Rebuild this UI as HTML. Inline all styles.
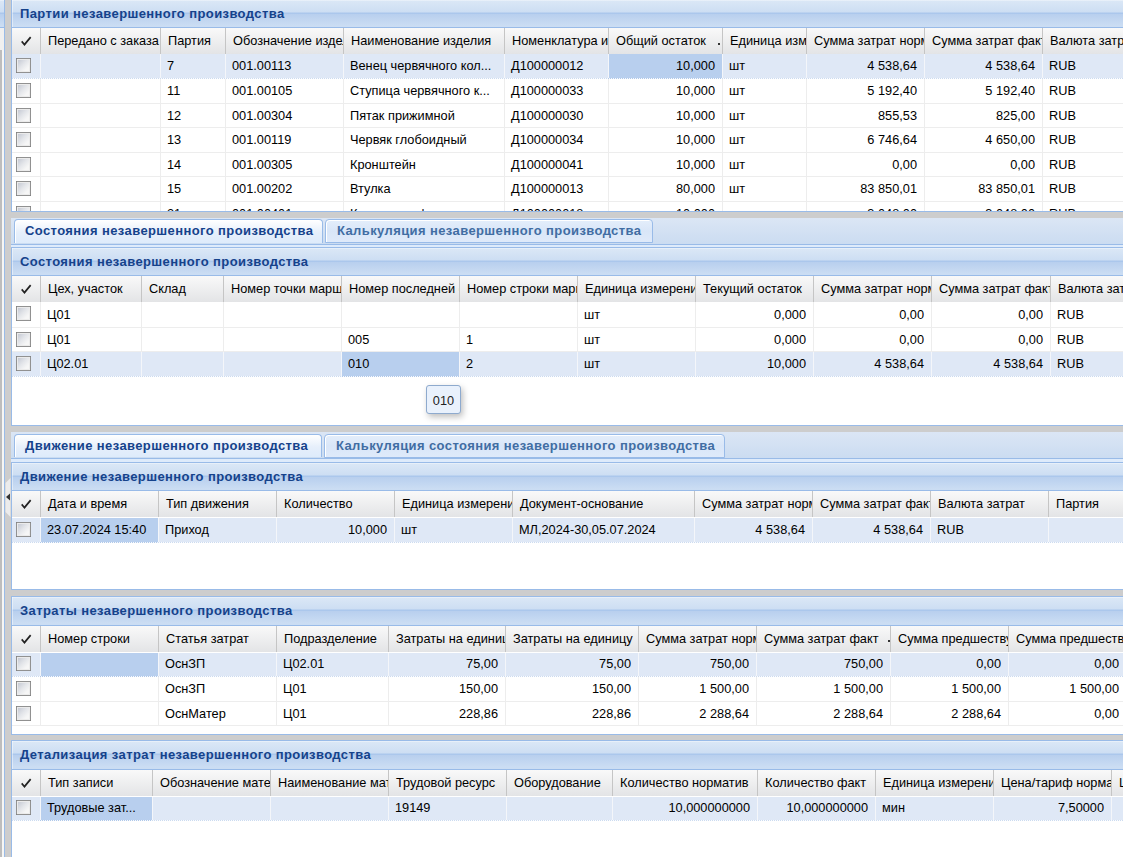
<!DOCTYPE html><html><head><meta charset="utf-8"><style>
*{margin:0;padding:0;box-sizing:border-box}
html,body{width:1123px;height:857px;overflow:hidden;background:#cdcdcd;font-family:'Liberation Sans', sans-serif;font-size:12.75px;color:#000}
div,svg{position:absolute}
.ph{left:12px;width:1111px;background:linear-gradient(to bottom,#f5f8fc 0px,#dae7f6 1px,#cddef3 12px,#abc7ec 13px,#abc7ec 14px,#b8cfee 14px,#cbddf3 26px);border-bottom:1px solid #99bbe8;box-shadow:inset 1px 0 0 rgba(255,255,255,0.45)}
.pt{position:absolute;left:8px;top:6px;font-weight:bold;color:#15428b;font-size:13px;letter-spacing:0.4px;white-space:nowrap}
.gh{left:12px;width:1111px;height:26px;background:linear-gradient(to bottom,#f9f9f9,#e3e4e6)}
.ck{left:12px}
.hs{width:1px;height:26px;background:#c5c5c5}
.hc{height:26px;line-height:26px;padding-left:7px;white-space:nowrap;overflow:hidden;color:#000}
.row{left:12px;width:1111px;background:#fff}
.row.sel{background:#dfe8f6}
.selc{background:#b8cfee}
.cl{width:1px;background:#ededed}
.cl.s{background:#f4f6fa}
.rb{left:12px;width:1111px;height:1px;background:#ededed}
.rb.f{background:repeating-linear-gradient(to right,rgba(150,180,225,0.25) 0 1px,rgba(255,255,255,0.9) 1px 2px)}
.cb{width:15px;height:15px;border:1px solid #7f7f7f;background:#ebebeb}
.cb::after{content:'';position:absolute;left:1px;top:1px;width:11px;height:11px;background:linear-gradient(135deg,#c6cad4 0%,#e4e6ea 45%,#f6f6f6 80%);box-shadow:0 0 1px 1px #ebebeb}
.c{padding-left:7px;white-space:nowrap;overflow:hidden}
.c.r{padding-left:0;padding-right:7px;text-align:right}
.body{left:12px;width:1111px;background:#fff}
.vb{width:1px;background:#99bbe8}
.hb{left:12px;width:1111px;height:1px;background:#99bbe8}
.tb{left:11px;width:1112px;height:30px;background:linear-gradient(to bottom,#dbe6f5,#cbdcf1)}
.tab{border:1px solid #99bbe8;border-radius:4px 4px 0 0;background:linear-gradient(to bottom,#e4eefb,#d9e6f8 50%,#dfeafa);box-shadow:inset 1px 1px 0 #fff}
.tab span{position:absolute;left:11px;top:3px;font-weight:bold;color:#416da3;font-size:13px;letter-spacing:0.4px;white-space:nowrap}
.tab.act{border-bottom:0;background:linear-gradient(to bottom,#ffffff,#e6effb 55%,#deebfb)}
.tab.act span{color:#15428b;left:10px}
.tbs{left:11px;width:1112px;height:4px;border-top:1px solid #99bbe8;border-bottom:1px solid #99bbe8;background:#deebfb}
.tip{left:426px;top:385px;width:35px;height:29px;border:1px solid #8eaace;border-radius:3px;background:#e9f1fc;box-shadow:2px 3px 6px rgba(0,0,0,0.25);text-align:center;line-height:29px;color:#222}
</style></head><body>
<div style="left:0;top:0;width:2px;height:857px;background:#bdbdbd"></div>
<div style="left:2px;top:0;width:2px;height:857px;background:#f6f6f4"></div>
<div style="left:0;top:0;width:4px;height:27px;background:linear-gradient(to bottom,#f5f8fc 0px,#dae7f6 1px,#cddef3 12px,#abc7ec 13px,#abc7ec 14px,#b8cfee 14px,#cbddf3 26px)"></div>
<div style="left:0;top:27px;width:4px;height:1px;background:#99bbe8"></div>
<div style="left:0;top:28px;width:4px;height:22px;background:#f0f0f0"></div>
<div class="vb" style="left:4px;top:0;height:857px"></div>
<svg style="left:5px;top:477px" width="6" height="41" viewBox="0 0 6 41"><path d="M0.5 6 L5.5 1 L5.5 40 L0.5 35 Z" fill="#ececec"/><path d="M1 20 L5 16.5 L5 23.5 Z" fill="#333"/></svg>
<div class="body" style="top:28px;height:183px"></div>
<div class="ph" style="top:0px;height:28px"><span class="pt" style="top:6px">Партии незавершенного производства</span></div>
<div class="gh" style="top:28px;height:26px"></div>
<svg class="ck" style="top:28px" width="28" height="26" viewBox="0 0 28 26"><path d="M9.1 13.9 L10.3 12.8 L12.4 15.3 L18.0 8.6 L19.3 9.7 L12.5 18.0 Z" fill="#222"/></svg>
<div class="hs" style="left:40px;top:28px;height:26px"></div>
<div class="hc" style="left:41px;top:28px;width:119px;height:26px;line-height:26px">Передано с заказа</div>
<div class="hs" style="left:160px;top:28px;height:26px"></div>
<div class="hc" style="left:161px;top:28px;width:64px;height:26px;line-height:26px">Партия</div>
<div class="hs" style="left:225px;top:28px;height:26px"></div>
<div class="hc" style="left:226px;top:28px;width:117px;height:26px;line-height:26px">Обозначение изделия</div>
<div class="hs" style="left:343px;top:28px;height:26px"></div>
<div class="hc" style="left:344px;top:28px;width:160px;height:26px;line-height:26px">Наименование изделия</div>
<div class="hs" style="left:504px;top:28px;height:26px"></div>
<div class="hc" style="left:505px;top:28px;width:103px;height:26px;line-height:26px">Номенклатура изделия</div>
<div class="hs" style="left:608px;top:28px;height:26px"></div>
<div class="hc" style="left:609px;top:28px;width:113px;height:26px;line-height:26px">Общий остаток</div>
<div class="hs" style="left:722px;top:28px;height:26px"></div>
<div class="hc" style="left:723px;top:28px;width:83px;height:26px;line-height:26px">Единица измерения</div>
<div class="hs" style="left:806px;top:28px;height:26px"></div>
<div class="hc" style="left:807px;top:28px;width:117px;height:26px;line-height:26px">Сумма затрат норматив</div>
<div class="hs" style="left:924px;top:28px;height:26px"></div>
<div class="hc" style="left:925px;top:28px;width:117px;height:26px;line-height:26px">Сумма затрат факт</div>
<div class="hs" style="left:1042px;top:28px;height:26px"></div>
<div class="hc" style="left:1043px;top:28px;width:117px;height:26px;line-height:26px">Валюта затрат</div>
<div class="row sel" style="top:54px;height:25px"></div>
<div class="selc" style="left:608px;top:54px;width:114px;height:25px"></div>
<div class="cl s" style="left:40px;top:54px;height:24px"></div>
<div class="cl s" style="left:160px;top:54px;height:24px"></div>
<div class="cl s" style="left:225px;top:54px;height:24px"></div>
<div class="cl s" style="left:343px;top:54px;height:24px"></div>
<div class="cl s" style="left:504px;top:54px;height:24px"></div>
<div class="cl s" style="left:608px;top:54px;height:24px"></div>
<div class="cl s" style="left:722px;top:54px;height:24px"></div>
<div class="cl s" style="left:806px;top:54px;height:24px"></div>
<div class="cl s" style="left:924px;top:54px;height:24px"></div>
<div class="cl s" style="left:1042px;top:54px;height:24px"></div>
<div class="rb f" style="top:78px"></div>
<div class="cb" style="left:16px;top:58px"></div>
<div class="c" style="left:160px;top:54px;width:65px;height:24px;line-height:24px">7</div>
<div class="c" style="left:225px;top:54px;width:118px;height:24px;line-height:24px">001.00113</div>
<div class="c" style="left:343px;top:54px;width:161px;height:24px;line-height:24px">Венец червячного кол...</div>
<div class="c" style="left:504px;top:54px;width:104px;height:24px;line-height:24px">Д100000012</div>
<div class="c r" style="left:608px;top:54px;width:114px;height:24px;line-height:24px">10,000</div>
<div class="c" style="left:722px;top:54px;width:84px;height:24px;line-height:24px">шт</div>
<div class="c r" style="left:806px;top:54px;width:118px;height:24px;line-height:24px">4 538,64</div>
<div class="c r" style="left:924px;top:54px;width:118px;height:24px;line-height:24px">4 538,64</div>
<div class="c" style="left:1042px;top:54px;width:118px;height:24px;line-height:24px">RUB</div>
<div class="row" style="top:79px;height:24px"></div>
<div class="cl" style="left:40px;top:79px;height:24px"></div>
<div class="cl" style="left:160px;top:79px;height:24px"></div>
<div class="cl" style="left:225px;top:79px;height:24px"></div>
<div class="cl" style="left:343px;top:79px;height:24px"></div>
<div class="cl" style="left:504px;top:79px;height:24px"></div>
<div class="cl" style="left:608px;top:79px;height:24px"></div>
<div class="cl" style="left:722px;top:79px;height:24px"></div>
<div class="cl" style="left:806px;top:79px;height:24px"></div>
<div class="cl" style="left:924px;top:79px;height:24px"></div>
<div class="cl" style="left:1042px;top:79px;height:24px"></div>
<div class="rb" style="top:103px"></div>
<div class="cb" style="left:16px;top:83px"></div>
<div class="c" style="left:160px;top:79px;width:65px;height:24px;line-height:24px">11</div>
<div class="c" style="left:225px;top:79px;width:118px;height:24px;line-height:24px">001.00105</div>
<div class="c" style="left:343px;top:79px;width:161px;height:24px;line-height:24px">Ступица червячного к...</div>
<div class="c" style="left:504px;top:79px;width:104px;height:24px;line-height:24px">Д100000033</div>
<div class="c r" style="left:608px;top:79px;width:114px;height:24px;line-height:24px">10,000</div>
<div class="c" style="left:722px;top:79px;width:84px;height:24px;line-height:24px">шт</div>
<div class="c r" style="left:806px;top:79px;width:118px;height:24px;line-height:24px">5 192,40</div>
<div class="c r" style="left:924px;top:79px;width:118px;height:24px;line-height:24px">5 192,40</div>
<div class="c" style="left:1042px;top:79px;width:118px;height:24px;line-height:24px">RUB</div>
<div class="row" style="top:104px;height:23px"></div>
<div class="cl" style="left:40px;top:104px;height:23px"></div>
<div class="cl" style="left:160px;top:104px;height:23px"></div>
<div class="cl" style="left:225px;top:104px;height:23px"></div>
<div class="cl" style="left:343px;top:104px;height:23px"></div>
<div class="cl" style="left:504px;top:104px;height:23px"></div>
<div class="cl" style="left:608px;top:104px;height:23px"></div>
<div class="cl" style="left:722px;top:104px;height:23px"></div>
<div class="cl" style="left:806px;top:104px;height:23px"></div>
<div class="cl" style="left:924px;top:104px;height:23px"></div>
<div class="cl" style="left:1042px;top:104px;height:23px"></div>
<div class="rb" style="top:127px"></div>
<div class="cb" style="left:16px;top:108px"></div>
<div class="c" style="left:160px;top:104px;width:65px;height:23px;line-height:23px">12</div>
<div class="c" style="left:225px;top:104px;width:118px;height:23px;line-height:23px">001.00304</div>
<div class="c" style="left:343px;top:104px;width:161px;height:23px;line-height:23px">Пятак прижимной</div>
<div class="c" style="left:504px;top:104px;width:104px;height:23px;line-height:23px">Д100000030</div>
<div class="c r" style="left:608px;top:104px;width:114px;height:23px;line-height:23px">10,000</div>
<div class="c" style="left:722px;top:104px;width:84px;height:23px;line-height:23px">шт</div>
<div class="c r" style="left:806px;top:104px;width:118px;height:23px;line-height:23px">855,53</div>
<div class="c r" style="left:924px;top:104px;width:118px;height:23px;line-height:23px">825,00</div>
<div class="c" style="left:1042px;top:104px;width:118px;height:23px;line-height:23px">RUB</div>
<div class="row" style="top:128px;height:24px"></div>
<div class="cl" style="left:40px;top:128px;height:24px"></div>
<div class="cl" style="left:160px;top:128px;height:24px"></div>
<div class="cl" style="left:225px;top:128px;height:24px"></div>
<div class="cl" style="left:343px;top:128px;height:24px"></div>
<div class="cl" style="left:504px;top:128px;height:24px"></div>
<div class="cl" style="left:608px;top:128px;height:24px"></div>
<div class="cl" style="left:722px;top:128px;height:24px"></div>
<div class="cl" style="left:806px;top:128px;height:24px"></div>
<div class="cl" style="left:924px;top:128px;height:24px"></div>
<div class="cl" style="left:1042px;top:128px;height:24px"></div>
<div class="rb" style="top:152px"></div>
<div class="cb" style="left:16px;top:132px"></div>
<div class="c" style="left:160px;top:128px;width:65px;height:24px;line-height:24px">13</div>
<div class="c" style="left:225px;top:128px;width:118px;height:24px;line-height:24px">001.00119</div>
<div class="c" style="left:343px;top:128px;width:161px;height:24px;line-height:24px">Червяк глобоидный</div>
<div class="c" style="left:504px;top:128px;width:104px;height:24px;line-height:24px">Д100000034</div>
<div class="c r" style="left:608px;top:128px;width:114px;height:24px;line-height:24px">10,000</div>
<div class="c" style="left:722px;top:128px;width:84px;height:24px;line-height:24px">шт</div>
<div class="c r" style="left:806px;top:128px;width:118px;height:24px;line-height:24px">6 746,64</div>
<div class="c r" style="left:924px;top:128px;width:118px;height:24px;line-height:24px">4 650,00</div>
<div class="c" style="left:1042px;top:128px;width:118px;height:24px;line-height:24px">RUB</div>
<div class="row" style="top:153px;height:23px"></div>
<div class="cl" style="left:40px;top:153px;height:23px"></div>
<div class="cl" style="left:160px;top:153px;height:23px"></div>
<div class="cl" style="left:225px;top:153px;height:23px"></div>
<div class="cl" style="left:343px;top:153px;height:23px"></div>
<div class="cl" style="left:504px;top:153px;height:23px"></div>
<div class="cl" style="left:608px;top:153px;height:23px"></div>
<div class="cl" style="left:722px;top:153px;height:23px"></div>
<div class="cl" style="left:806px;top:153px;height:23px"></div>
<div class="cl" style="left:924px;top:153px;height:23px"></div>
<div class="cl" style="left:1042px;top:153px;height:23px"></div>
<div class="rb" style="top:176px"></div>
<div class="cb" style="left:16px;top:157px"></div>
<div class="c" style="left:160px;top:153px;width:65px;height:23px;line-height:23px">14</div>
<div class="c" style="left:225px;top:153px;width:118px;height:23px;line-height:23px">001.00305</div>
<div class="c" style="left:343px;top:153px;width:161px;height:23px;line-height:23px">Кронштейн</div>
<div class="c" style="left:504px;top:153px;width:104px;height:23px;line-height:23px">Д100000041</div>
<div class="c r" style="left:608px;top:153px;width:114px;height:23px;line-height:23px">10,000</div>
<div class="c" style="left:722px;top:153px;width:84px;height:23px;line-height:23px">шт</div>
<div class="c r" style="left:806px;top:153px;width:118px;height:23px;line-height:23px">0,00</div>
<div class="c r" style="left:924px;top:153px;width:118px;height:23px;line-height:23px">0,00</div>
<div class="c" style="left:1042px;top:153px;width:118px;height:23px;line-height:23px">RUB</div>
<div class="row" style="top:177px;height:24px"></div>
<div class="cl" style="left:40px;top:177px;height:24px"></div>
<div class="cl" style="left:160px;top:177px;height:24px"></div>
<div class="cl" style="left:225px;top:177px;height:24px"></div>
<div class="cl" style="left:343px;top:177px;height:24px"></div>
<div class="cl" style="left:504px;top:177px;height:24px"></div>
<div class="cl" style="left:608px;top:177px;height:24px"></div>
<div class="cl" style="left:722px;top:177px;height:24px"></div>
<div class="cl" style="left:806px;top:177px;height:24px"></div>
<div class="cl" style="left:924px;top:177px;height:24px"></div>
<div class="cl" style="left:1042px;top:177px;height:24px"></div>
<div class="rb" style="top:201px"></div>
<div class="cb" style="left:16px;top:181px"></div>
<div class="c" style="left:160px;top:177px;width:65px;height:24px;line-height:24px">15</div>
<div class="c" style="left:225px;top:177px;width:118px;height:24px;line-height:24px">001.00202</div>
<div class="c" style="left:343px;top:177px;width:161px;height:24px;line-height:24px">Втулка</div>
<div class="c" style="left:504px;top:177px;width:104px;height:24px;line-height:24px">Д100000013</div>
<div class="c r" style="left:608px;top:177px;width:114px;height:24px;line-height:24px">80,000</div>
<div class="c" style="left:722px;top:177px;width:84px;height:24px;line-height:24px">шт</div>
<div class="c r" style="left:806px;top:177px;width:118px;height:24px;line-height:24px">83 850,01</div>
<div class="c r" style="left:924px;top:177px;width:118px;height:24px;line-height:24px">83 850,01</div>
<div class="c" style="left:1042px;top:177px;width:118px;height:24px;line-height:24px">RUB</div>
<div class="row" style="top:202px;height:24px"></div>
<div class="cl" style="left:40px;top:202px;height:24px"></div>
<div class="cl" style="left:160px;top:202px;height:24px"></div>
<div class="cl" style="left:225px;top:202px;height:24px"></div>
<div class="cl" style="left:343px;top:202px;height:24px"></div>
<div class="cl" style="left:504px;top:202px;height:24px"></div>
<div class="cl" style="left:608px;top:202px;height:24px"></div>
<div class="cl" style="left:722px;top:202px;height:24px"></div>
<div class="cl" style="left:806px;top:202px;height:24px"></div>
<div class="cl" style="left:924px;top:202px;height:24px"></div>
<div class="cl" style="left:1042px;top:202px;height:24px"></div>
<div class="rb" style="top:226px"></div>
<div class="cb" style="left:16px;top:206px"></div>
<div class="c" style="left:160px;top:202px;width:65px;height:24px;line-height:24px">21</div>
<div class="c" style="left:225px;top:202px;width:118px;height:24px;line-height:24px">001.00401</div>
<div class="c" style="left:343px;top:202px;width:161px;height:24px;line-height:24px">Крепление фланцевое...</div>
<div class="c" style="left:504px;top:202px;width:104px;height:24px;line-height:24px">Д100000018</div>
<div class="c r" style="left:608px;top:202px;width:114px;height:24px;line-height:24px">10,000</div>
<div class="c" style="left:722px;top:202px;width:84px;height:24px;line-height:24px">шт</div>
<div class="c r" style="left:806px;top:202px;width:118px;height:24px;line-height:24px">3 048,00</div>
<div class="c r" style="left:924px;top:202px;width:118px;height:24px;line-height:24px">3 048,00</div>
<div class="c" style="left:1042px;top:202px;width:118px;height:24px;line-height:24px">RUB</div>
<div class="hb" style="top:211px"></div>
<div style="left:12px;top:212px;width:1111px;height:6px;background:#cdcdcd"></div>
<div class="vb" style="left:11px;top:0;height:212px"></div>
<div class="tb" style="top:218px;height:26px"></div>
<div class="tab act" style="left:14px;top:219px;width:309px;height:24px"><span>Состояния незавершенного производства</span></div>
<div class="tab" style="left:325px;top:219px;width:328px;height:24px"><span>Калькуляция незавершенного производства</span></div>
<div class="tbs" style="top:244px;height:4px"></div>
<div class="body" style="top:276px;height:149px"></div>
<div class="ph" style="top:248px;height:28px"><span class="pt" style="top:6px">Состояния незавершенного производства</span></div>
<div class="gh" style="top:276px;height:26px"></div>
<svg class="ck" style="top:276px" width="28" height="26" viewBox="0 0 28 26"><path d="M9.1 13.9 L10.3 12.8 L12.4 15.3 L18.0 8.6 L19.3 9.7 L12.5 18.0 Z" fill="#222"/></svg>
<div class="hs" style="left:40px;top:276px;height:26px"></div>
<div class="hc" style="left:41px;top:276px;width:100px;height:26px;line-height:26px">Цех, участок</div>
<div class="hs" style="left:141px;top:276px;height:26px"></div>
<div class="hc" style="left:142px;top:276px;width:81px;height:26px;line-height:26px">Склад</div>
<div class="hs" style="left:223px;top:276px;height:26px"></div>
<div class="hc" style="left:224px;top:276px;width:117px;height:26px;line-height:26px">Номер точки маршрута</div>
<div class="hs" style="left:341px;top:276px;height:26px"></div>
<div class="hc" style="left:342px;top:276px;width:117px;height:26px;line-height:26px">Номер последней операции</div>
<div class="hs" style="left:459px;top:276px;height:26px"></div>
<div class="hc" style="left:460px;top:276px;width:117px;height:26px;line-height:26px">Номер строки маршрута</div>
<div class="hs" style="left:577px;top:276px;height:26px"></div>
<div class="hc" style="left:578px;top:276px;width:117px;height:26px;line-height:26px">Единица измерения</div>
<div class="hs" style="left:695px;top:276px;height:26px"></div>
<div class="hc" style="left:696px;top:276px;width:117px;height:26px;line-height:26px">Текущий остаток</div>
<div class="hs" style="left:813px;top:276px;height:26px"></div>
<div class="hc" style="left:814px;top:276px;width:117px;height:26px;line-height:26px">Сумма затрат норматив</div>
<div class="hs" style="left:931px;top:276px;height:26px"></div>
<div class="hc" style="left:932px;top:276px;width:118px;height:26px;line-height:26px">Сумма затрат факт</div>
<div class="hs" style="left:1050px;top:276px;height:26px"></div>
<div class="hc" style="left:1051px;top:276px;width:117px;height:26px;line-height:26px">Валюта затрат</div>
<div class="row" style="top:302px;height:25px"></div>
<div class="cl" style="left:40px;top:302px;height:25px"></div>
<div class="cl" style="left:141px;top:302px;height:25px"></div>
<div class="cl" style="left:223px;top:302px;height:25px"></div>
<div class="cl" style="left:341px;top:302px;height:25px"></div>
<div class="cl" style="left:459px;top:302px;height:25px"></div>
<div class="cl" style="left:577px;top:302px;height:25px"></div>
<div class="cl" style="left:695px;top:302px;height:25px"></div>
<div class="cl" style="left:813px;top:302px;height:25px"></div>
<div class="cl" style="left:931px;top:302px;height:25px"></div>
<div class="cl" style="left:1050px;top:302px;height:25px"></div>
<div class="rb" style="top:327px"></div>
<div class="cb" style="left:16px;top:306px"></div>
<div class="c" style="left:40px;top:302px;width:101px;height:25px;line-height:25px">Ц01</div>
<div class="c" style="left:577px;top:302px;width:118px;height:25px;line-height:25px">шт</div>
<div class="c r" style="left:695px;top:302px;width:118px;height:25px;line-height:25px">0,000</div>
<div class="c r" style="left:813px;top:302px;width:118px;height:25px;line-height:25px">0,00</div>
<div class="c r" style="left:931px;top:302px;width:119px;height:25px;line-height:25px">0,00</div>
<div class="c" style="left:1050px;top:302px;width:118px;height:25px;line-height:25px">RUB</div>
<div class="row" style="top:328px;height:23px"></div>
<div class="cl" style="left:40px;top:328px;height:23px"></div>
<div class="cl" style="left:141px;top:328px;height:23px"></div>
<div class="cl" style="left:223px;top:328px;height:23px"></div>
<div class="cl" style="left:341px;top:328px;height:23px"></div>
<div class="cl" style="left:459px;top:328px;height:23px"></div>
<div class="cl" style="left:577px;top:328px;height:23px"></div>
<div class="cl" style="left:695px;top:328px;height:23px"></div>
<div class="cl" style="left:813px;top:328px;height:23px"></div>
<div class="cl" style="left:931px;top:328px;height:23px"></div>
<div class="cl" style="left:1050px;top:328px;height:23px"></div>
<div class="rb" style="top:351px"></div>
<div class="cb" style="left:16px;top:332px"></div>
<div class="c" style="left:40px;top:328px;width:101px;height:23px;line-height:23px">Ц01</div>
<div class="c" style="left:341px;top:328px;width:118px;height:23px;line-height:23px">005</div>
<div class="c" style="left:459px;top:328px;width:118px;height:23px;line-height:23px">1</div>
<div class="c" style="left:577px;top:328px;width:118px;height:23px;line-height:23px">шт</div>
<div class="c r" style="left:695px;top:328px;width:118px;height:23px;line-height:23px">0,000</div>
<div class="c r" style="left:813px;top:328px;width:118px;height:23px;line-height:23px">0,00</div>
<div class="c r" style="left:931px;top:328px;width:119px;height:23px;line-height:23px">0,00</div>
<div class="c" style="left:1050px;top:328px;width:118px;height:23px;line-height:23px">RUB</div>
<div class="row sel" style="top:352px;height:25px"></div>
<div class="selc" style="left:341px;top:352px;width:118px;height:25px"></div>
<div class="cl s" style="left:40px;top:352px;height:24px"></div>
<div class="cl s" style="left:141px;top:352px;height:24px"></div>
<div class="cl s" style="left:223px;top:352px;height:24px"></div>
<div class="cl s" style="left:341px;top:352px;height:24px"></div>
<div class="cl s" style="left:459px;top:352px;height:24px"></div>
<div class="cl s" style="left:577px;top:352px;height:24px"></div>
<div class="cl s" style="left:695px;top:352px;height:24px"></div>
<div class="cl s" style="left:813px;top:352px;height:24px"></div>
<div class="cl s" style="left:931px;top:352px;height:24px"></div>
<div class="cl s" style="left:1050px;top:352px;height:24px"></div>
<div class="rb f" style="top:376px"></div>
<div class="cb" style="left:16px;top:356px"></div>
<div class="c" style="left:40px;top:352px;width:101px;height:24px;line-height:24px">Ц02.01</div>
<div class="c" style="left:341px;top:352px;width:118px;height:24px;line-height:24px">010</div>
<div class="c" style="left:459px;top:352px;width:118px;height:24px;line-height:24px">2</div>
<div class="c" style="left:577px;top:352px;width:118px;height:24px;line-height:24px">шт</div>
<div class="c r" style="left:695px;top:352px;width:118px;height:24px;line-height:24px">10,000</div>
<div class="c r" style="left:813px;top:352px;width:118px;height:24px;line-height:24px">4 538,64</div>
<div class="c r" style="left:931px;top:352px;width:119px;height:24px;line-height:24px">4 538,64</div>
<div class="c" style="left:1050px;top:352px;width:118px;height:24px;line-height:24px">RUB</div>
<div class="hb" style="top:425px"></div>
<div class="vb" style="left:11px;top:247px;height:179px"></div>
<div class="tip">010</div>
<div class="tb" style="top:432px;height:26px"></div>
<div class="tab act" style="left:14px;top:434px;width:308px;height:23px"><span>Движение незавершенного производства</span></div>
<div class="tab" style="left:324px;top:434px;width:401px;height:24px"><span>Калькуляция состояния незавершенного производства</span></div>
<div class="tbs" style="top:458px;height:5px"></div>
<div class="body" style="top:491px;height:98px"></div>
<div class="ph" style="top:463px;height:28px"><span class="pt" style="top:6px">Движение незавершенного производства</span></div>
<div class="gh" style="top:491px;height:26px"></div>
<svg class="ck" style="top:491px" width="28" height="26" viewBox="0 0 28 26"><path d="M9.1 13.9 L10.3 12.8 L12.4 15.3 L18.0 8.6 L19.3 9.7 L12.5 18.0 Z" fill="#222"/></svg>
<div class="hs" style="left:40px;top:491px;height:26px"></div>
<div class="hc" style="left:41px;top:491px;width:117px;height:26px;line-height:26px">Дата и время</div>
<div class="hs" style="left:158px;top:491px;height:26px"></div>
<div class="hc" style="left:159px;top:491px;width:117px;height:26px;line-height:26px">Тип движения</div>
<div class="hs" style="left:276px;top:491px;height:26px"></div>
<div class="hc" style="left:277px;top:491px;width:117px;height:26px;line-height:26px">Количество</div>
<div class="hs" style="left:394px;top:491px;height:26px"></div>
<div class="hc" style="left:395px;top:491px;width:117px;height:26px;line-height:26px">Единица измерения</div>
<div class="hs" style="left:512px;top:491px;height:26px"></div>
<div class="hc" style="left:513px;top:491px;width:181px;height:26px;line-height:26px">Документ-основание</div>
<div class="hs" style="left:694px;top:491px;height:26px"></div>
<div class="hc" style="left:695px;top:491px;width:117px;height:26px;line-height:26px">Сумма затрат норматив</div>
<div class="hs" style="left:812px;top:491px;height:26px"></div>
<div class="hc" style="left:813px;top:491px;width:117px;height:26px;line-height:26px">Сумма затрат факт</div>
<div class="hs" style="left:930px;top:491px;height:26px"></div>
<div class="hc" style="left:931px;top:491px;width:117px;height:26px;line-height:26px">Валюта затрат</div>
<div class="hs" style="left:1048px;top:491px;height:26px"></div>
<div class="hc" style="left:1049px;top:491px;width:117px;height:26px;line-height:26px">Партия</div>
<div class="row sel" style="top:518px;height:25px"></div>
<div class="selc" style="left:40px;top:518px;width:118px;height:25px"></div>
<div class="cl s" style="left:40px;top:518px;height:24px"></div>
<div class="cl s" style="left:158px;top:518px;height:24px"></div>
<div class="cl s" style="left:276px;top:518px;height:24px"></div>
<div class="cl s" style="left:394px;top:518px;height:24px"></div>
<div class="cl s" style="left:512px;top:518px;height:24px"></div>
<div class="cl s" style="left:694px;top:518px;height:24px"></div>
<div class="cl s" style="left:812px;top:518px;height:24px"></div>
<div class="cl s" style="left:930px;top:518px;height:24px"></div>
<div class="cl s" style="left:1048px;top:518px;height:24px"></div>
<div class="rb f" style="top:542px"></div>
<div class="cb" style="left:16px;top:522px"></div>
<div class="c" style="left:40px;top:518px;width:118px;height:24px;line-height:24px">23.07.2024 15:40</div>
<div class="c" style="left:158px;top:518px;width:118px;height:24px;line-height:24px">Приход</div>
<div class="c r" style="left:276px;top:518px;width:118px;height:24px;line-height:24px">10,000</div>
<div class="c" style="left:394px;top:518px;width:118px;height:24px;line-height:24px">шт</div>
<div class="c" style="left:512px;top:518px;width:182px;height:24px;line-height:24px">МЛ,2024-30,05.07.2024</div>
<div class="c r" style="left:694px;top:518px;width:118px;height:24px;line-height:24px">4 538,64</div>
<div class="c r" style="left:812px;top:518px;width:118px;height:24px;line-height:24px">4 538,64</div>
<div class="c" style="left:930px;top:518px;width:118px;height:24px;line-height:24px">RUB</div>
<div class="hb" style="top:589px"></div>
<div class="vb" style="left:11px;top:462px;height:128px"></div>
<div class="hb" style="top:596px"></div>
<div class="body" style="top:626px;height:108px"></div>
<div class="ph" style="top:597px;height:29px"><span class="pt" style="top:6px">Затраты незавершенного производства</span></div>
<div class="gh" style="top:626px;height:26px"></div>
<svg class="ck" style="top:626px" width="28" height="26" viewBox="0 0 28 26"><path d="M9.1 13.9 L10.3 12.8 L12.4 15.3 L18.0 8.6 L19.3 9.7 L12.5 18.0 Z" fill="#222"/></svg>
<div class="hs" style="left:40px;top:626px;height:26px"></div>
<div class="hc" style="left:41px;top:626px;width:117px;height:26px;line-height:26px">Номер строки</div>
<div class="hs" style="left:158px;top:626px;height:26px"></div>
<div class="hc" style="left:159px;top:626px;width:117px;height:26px;line-height:26px">Статья затрат</div>
<div class="hs" style="left:276px;top:626px;height:26px"></div>
<div class="hc" style="left:277px;top:626px;width:111px;height:26px;line-height:26px">Подразделение</div>
<div class="hs" style="left:388px;top:626px;height:26px"></div>
<div class="hc" style="left:389px;top:626px;width:116px;height:26px;line-height:26px">Затраты на единицу</div>
<div class="hs" style="left:505px;top:626px;height:26px"></div>
<div class="hc" style="left:506px;top:626px;width:132px;height:26px;line-height:26px">Затраты на единицу</div>
<div class="hs" style="left:638px;top:626px;height:26px"></div>
<div class="hc" style="left:639px;top:626px;width:117px;height:26px;line-height:26px">Сумма затрат норматив</div>
<div class="hs" style="left:756px;top:626px;height:26px"></div>
<div class="hc" style="left:757px;top:626px;width:133px;height:26px;line-height:26px">Сумма затрат факт</div>
<div class="hs" style="left:890px;top:626px;height:26px"></div>
<div class="hc" style="left:891px;top:626px;width:117px;height:26px;line-height:26px">Сумма предшествующих</div>
<div class="hs" style="left:1008px;top:626px;height:26px"></div>
<div class="hc" style="left:1009px;top:626px;width:117px;height:26px;line-height:26px">Сумма предшествующих</div>
<div class="row sel" style="top:652px;height:25px"></div>
<div class="selc" style="left:40px;top:652px;width:118px;height:25px"></div>
<div class="cl s" style="left:40px;top:652px;height:24px"></div>
<div class="cl s" style="left:158px;top:652px;height:24px"></div>
<div class="cl s" style="left:276px;top:652px;height:24px"></div>
<div class="cl s" style="left:388px;top:652px;height:24px"></div>
<div class="cl s" style="left:505px;top:652px;height:24px"></div>
<div class="cl s" style="left:638px;top:652px;height:24px"></div>
<div class="cl s" style="left:756px;top:652px;height:24px"></div>
<div class="cl s" style="left:890px;top:652px;height:24px"></div>
<div class="cl s" style="left:1008px;top:652px;height:24px"></div>
<div class="rb f" style="top:676px"></div>
<div class="cb" style="left:16px;top:656px"></div>
<div style="left:12px;top:652px;width:1111px;height:1px;background:#fff"></div>
<div class="c" style="left:158px;top:652px;width:118px;height:24px;line-height:24px">ОснЗП</div>
<div class="c" style="left:276px;top:652px;width:112px;height:24px;line-height:24px">Ц02.01</div>
<div class="c r" style="left:388px;top:652px;width:117px;height:24px;line-height:24px">75,00</div>
<div class="c r" style="left:505px;top:652px;width:133px;height:24px;line-height:24px">75,00</div>
<div class="c r" style="left:638px;top:652px;width:118px;height:24px;line-height:24px">750,00</div>
<div class="c r" style="left:756px;top:652px;width:134px;height:24px;line-height:24px">750,00</div>
<div class="c r" style="left:890px;top:652px;width:118px;height:24px;line-height:24px">0,00</div>
<div class="c r" style="left:1008px;top:652px;width:118px;height:24px;line-height:24px">0,00</div>
<div class="row" style="top:677px;height:24px"></div>
<div class="cl" style="left:40px;top:677px;height:24px"></div>
<div class="cl" style="left:158px;top:677px;height:24px"></div>
<div class="cl" style="left:276px;top:677px;height:24px"></div>
<div class="cl" style="left:388px;top:677px;height:24px"></div>
<div class="cl" style="left:505px;top:677px;height:24px"></div>
<div class="cl" style="left:638px;top:677px;height:24px"></div>
<div class="cl" style="left:756px;top:677px;height:24px"></div>
<div class="cl" style="left:890px;top:677px;height:24px"></div>
<div class="cl" style="left:1008px;top:677px;height:24px"></div>
<div class="rb" style="top:701px"></div>
<div class="cb" style="left:16px;top:681px"></div>
<div class="c" style="left:158px;top:677px;width:118px;height:24px;line-height:24px">ОснЗП</div>
<div class="c" style="left:276px;top:677px;width:112px;height:24px;line-height:24px">Ц01</div>
<div class="c r" style="left:388px;top:677px;width:117px;height:24px;line-height:24px">150,00</div>
<div class="c r" style="left:505px;top:677px;width:133px;height:24px;line-height:24px">150,00</div>
<div class="c r" style="left:638px;top:677px;width:118px;height:24px;line-height:24px">1 500,00</div>
<div class="c r" style="left:756px;top:677px;width:134px;height:24px;line-height:24px">1 500,00</div>
<div class="c r" style="left:890px;top:677px;width:118px;height:24px;line-height:24px">1 500,00</div>
<div class="c r" style="left:1008px;top:677px;width:118px;height:24px;line-height:24px">1 500,00</div>
<div class="row" style="top:702px;height:23px"></div>
<div class="cl" style="left:40px;top:702px;height:23px"></div>
<div class="cl" style="left:158px;top:702px;height:23px"></div>
<div class="cl" style="left:276px;top:702px;height:23px"></div>
<div class="cl" style="left:388px;top:702px;height:23px"></div>
<div class="cl" style="left:505px;top:702px;height:23px"></div>
<div class="cl" style="left:638px;top:702px;height:23px"></div>
<div class="cl" style="left:756px;top:702px;height:23px"></div>
<div class="cl" style="left:890px;top:702px;height:23px"></div>
<div class="cl" style="left:1008px;top:702px;height:23px"></div>
<div class="rb" style="top:725px"></div>
<div class="cb" style="left:16px;top:706px"></div>
<div class="c" style="left:158px;top:702px;width:118px;height:23px;line-height:23px">ОснМатер</div>
<div class="c" style="left:276px;top:702px;width:112px;height:23px;line-height:23px">Ц01</div>
<div class="c r" style="left:388px;top:702px;width:117px;height:23px;line-height:23px">228,86</div>
<div class="c r" style="left:505px;top:702px;width:133px;height:23px;line-height:23px">228,86</div>
<div class="c r" style="left:638px;top:702px;width:118px;height:23px;line-height:23px">2 288,64</div>
<div class="c r" style="left:756px;top:702px;width:134px;height:23px;line-height:23px">2 288,64</div>
<div class="c r" style="left:890px;top:702px;width:118px;height:23px;line-height:23px">2 288,64</div>
<div class="c r" style="left:1008px;top:702px;width:118px;height:23px;line-height:23px">0,00</div>
<div class="hb" style="top:734px"></div>
<div class="vb" style="left:11px;top:596px;height:139px"></div>
<div class="hb" style="top:740px"></div>
<div class="body" style="top:770px;height:87px"></div>
<div class="ph" style="top:741px;height:29px"><span class="pt" style="top:6px">Детализация затрат незавершенного производства</span></div>
<div class="gh" style="top:770px;height:26px"></div>
<svg class="ck" style="top:770px" width="28" height="26" viewBox="0 0 28 26"><path d="M9.1 13.9 L10.3 12.8 L12.4 15.3 L18.0 8.6 L19.3 9.7 L12.5 18.0 Z" fill="#222"/></svg>
<div class="hs" style="left:40px;top:770px;height:26px"></div>
<div class="hc" style="left:41px;top:770px;width:111px;height:26px;line-height:26px">Тип записи</div>
<div class="hs" style="left:152px;top:770px;height:26px"></div>
<div class="hc" style="left:153px;top:770px;width:117px;height:26px;line-height:26px">Обозначение материала</div>
<div class="hs" style="left:270px;top:770px;height:26px"></div>
<div class="hc" style="left:271px;top:770px;width:117px;height:26px;line-height:26px">Наименование материала</div>
<div class="hs" style="left:388px;top:770px;height:26px"></div>
<div class="hc" style="left:389px;top:770px;width:117px;height:26px;line-height:26px">Трудовой ресурс</div>
<div class="hs" style="left:506px;top:770px;height:26px"></div>
<div class="hc" style="left:507px;top:770px;width:105px;height:26px;line-height:26px">Оборудование</div>
<div class="hs" style="left:612px;top:770px;height:26px"></div>
<div class="hc" style="left:613px;top:770px;width:144px;height:26px;line-height:26px">Количество норматив</div>
<div class="hs" style="left:757px;top:770px;height:26px"></div>
<div class="hc" style="left:758px;top:770px;width:117px;height:26px;line-height:26px">Количество факт</div>
<div class="hs" style="left:875px;top:770px;height:26px"></div>
<div class="hc" style="left:876px;top:770px;width:117px;height:26px;line-height:26px">Единица измерения</div>
<div class="hs" style="left:993px;top:770px;height:26px"></div>
<div class="hc" style="left:994px;top:770px;width:117px;height:26px;line-height:26px">Цена/тариф норматив</div>
<div class="hs" style="left:1111px;top:770px;height:26px"></div>
<div class="hc" style="left:1112px;top:770px;width:117px;height:26px;line-height:26px">Цена</div>
<div class="row sel" style="top:796px;height:25px"></div>
<div class="selc" style="left:40px;top:796px;width:112px;height:25px"></div>
<div class="cl s" style="left:40px;top:796px;height:24px"></div>
<div class="cl s" style="left:152px;top:796px;height:24px"></div>
<div class="cl s" style="left:270px;top:796px;height:24px"></div>
<div class="cl s" style="left:388px;top:796px;height:24px"></div>
<div class="cl s" style="left:506px;top:796px;height:24px"></div>
<div class="cl s" style="left:612px;top:796px;height:24px"></div>
<div class="cl s" style="left:757px;top:796px;height:24px"></div>
<div class="cl s" style="left:875px;top:796px;height:24px"></div>
<div class="cl s" style="left:993px;top:796px;height:24px"></div>
<div class="cl s" style="left:1111px;top:796px;height:24px"></div>
<div class="rb f" style="top:820px"></div>
<div class="cb" style="left:16px;top:800px"></div>
<div style="left:12px;top:796px;width:1111px;height:1px;background:#fff"></div>
<div class="c" style="left:40px;top:796px;width:112px;height:24px;line-height:24px">Трудовые зат...</div>
<div class="c" style="left:388px;top:796px;width:118px;height:24px;line-height:24px">19149</div>
<div class="c r" style="left:612px;top:796px;width:145px;height:24px;line-height:24px">10,000000000</div>
<div class="c r" style="left:757px;top:796px;width:118px;height:24px;line-height:24px">10,000000000</div>
<div class="c" style="left:875px;top:796px;width:118px;height:24px;line-height:24px">мин</div>
<div class="c r" style="left:993px;top:796px;width:118px;height:24px;line-height:24px">7,50000</div>
<div class="vb" style="left:11px;top:740px;height:117px"></div>
<div style="left:718px;top:43px;width:2px;height:2px;background:#333"></div>
<div style="left:888px;top:640px;width:2px;height:2px;background:#333"></div>
</body></html>
